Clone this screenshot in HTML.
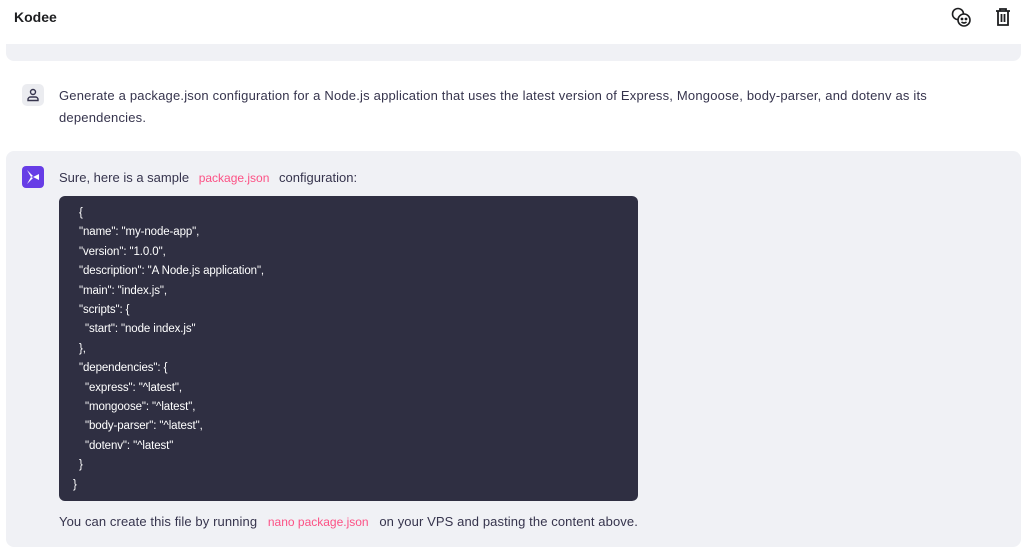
<!DOCTYPE html>
<html><head><meta charset="utf-8"><style>
*{margin:0;padding:0;box-sizing:border-box}
body{width:1024px;height:549px;background:#fff;font-family:"Liberation Sans",sans-serif;color:#36344d;overflow:hidden;position:relative}
.abs{position:absolute}
.t{font-size:13px;letter-spacing:0.2px;white-space:nowrap}
.pink{color:#fc5185;font-size:12px;letter-spacing:0}
.code div{position:absolute;font-size:11.5px;color:#fff;white-space:nowrap;letter-spacing:-0.1px}
</style></head><body>
<div class="abs" style="left:14px;top:9px;font-size:14px;font-weight:bold;color:#1d1e20">Kodee</div>
<svg class="abs" style="left:950px;top:6px" width="24" height="24" viewBox="0 0 24 24" fill="none" stroke="#1d1e20" stroke-width="1.6">
<circle cx="8" cy="8" r="5.5"/><circle cx="14" cy="14" r="6" fill="#fff"/>
<circle cx="12" cy="13" r=".6" fill="#1d1e20"/><circle cx="16" cy="13" r=".6" fill="#1d1e20"/><path d="M11.5 16q2.5 2 5 0"/></svg>
<svg class="abs" style="left:994px;top:7px" width="18" height="20" viewBox="0 0 18 20" fill="none" stroke="#1d1e20" stroke-width="1.8">
<path d="M2 4h14M6 4V2h6v2M4 4v14h10V4M7.5 7v8M10.5 7v8"/></svg>
<div class="abs" style="left:6px;top:44px;width:1015px;height:17px;background:#f0f1f5;border-radius:0 0 8px 8px"></div>
<div class="abs" style="left:22px;top:84px;width:22px;height:22px;background:#ebecf0;border-radius:5px"></div>
<svg class="abs" style="left:22px;top:84px" width="22" height="22" viewBox="0 0 22 22" fill="none" stroke="#36344d" stroke-width="1.4"><circle cx="11" cy="8" r="2.5"/><path d="M6 16.5v-1a2.5 2.5 0 0 1 2.5-2.5h5a2.5 2.5 0 0 1 2.5 2.5v1z"/></svg>
<div class="abs t" style="left:59px;top:88px">Generate a package.json configuration for a Node.js application that uses the latest version of Express, Mongoose, body-parser, and dotenv as its</div>
<div class="abs t" style="left:59px;top:110px">dependencies.</div>
<div class="abs" style="left:6px;top:151px;width:1015px;height:396px;background:#f0f1f5;border-radius:8px"></div>
<div class="abs" style="left:22px;top:166px;width:22px;height:22px;background:#673de6;border-radius:4px"></div>
<svg class="abs" style="left:22px;top:166px" width="22" height="22" viewBox="0 0 22 22" fill="#fff"><path d="M5 4l6 6-2 1zM5 18l6-6-2-1zM11 11l6-3v6z"/></svg>
<div class="abs t" style="left:59px;top:170px;letter-spacing:0">Sure, here is a sample <span class="pink" style="margin:0 6px">package.json</span> configuration:</div>
<div class="abs code" style="left:59px;top:196px;width:579px;height:305px;background:#2f2f42;border-radius:6px">
<div style="left:20px;top:11px">{</div>
<div style="left:20px;top:30px">"name": "my-node-app",</div>
<div style="left:20px;top:50px">"version": "1.0.0",</div>
<div style="left:20px;top:69px">"description": "A Node.js application",</div>
<div style="left:20px;top:89px">"main": "index.js",</div>
<div style="left:20px;top:108px">"scripts": {</div>
<div style="left:26px;top:127px">"start": "node index.js"</div>
<div style="left:20px;top:147px">},</div>
<div style="left:20px;top:166px">"dependencies": {</div>
<div style="left:26px;top:186px">"express": "^latest",</div>
<div style="left:26px;top:205px">"mongoose": "^latest",</div>
<div style="left:26px;top:224px">"body-parser": "^latest",</div>
<div style="left:26px;top:244px">"dotenv": "^latest"</div>
<div style="left:20px;top:263px">}</div>
<div style="left:14px;top:283px">}</div>
</div>
<div class="abs t" style="left:59px;top:514px;letter-spacing:0.1px">You can create this file by running <span class="pink" style="margin:0 7px">nano package.json</span> on your VPS and pasting the content above.</div>
</body></html>
